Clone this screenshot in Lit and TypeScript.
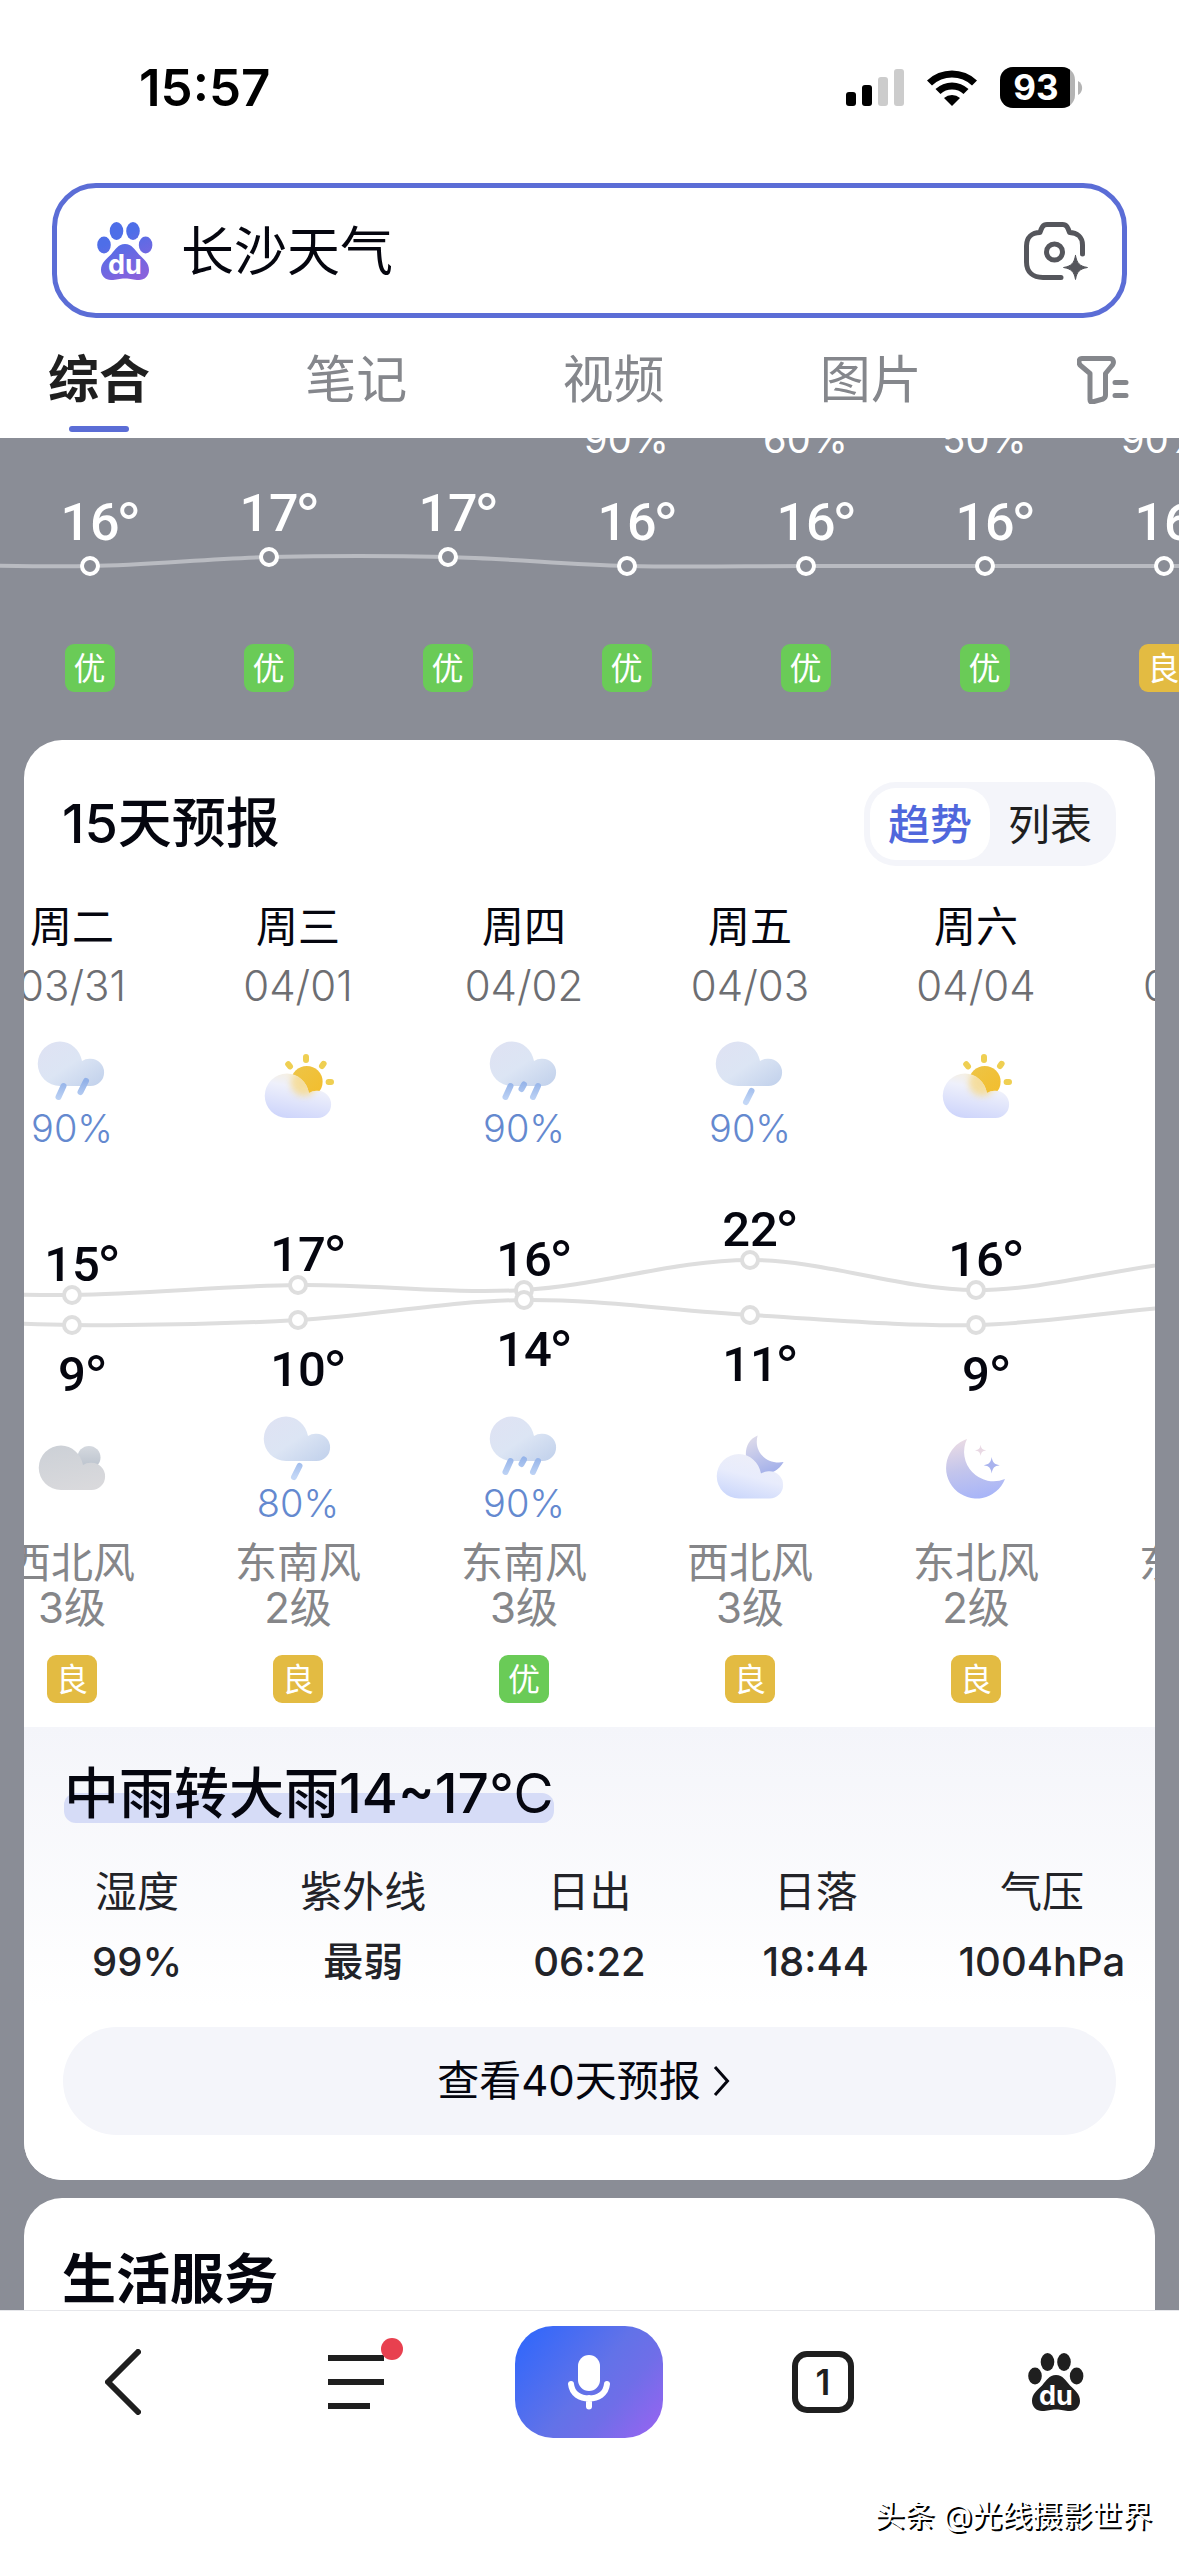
import { LitElement, html, svg, css, nothing } from "lit";
import { customElement, property } from "lit/decorators.js";
import { classMap } from "lit/directives/class-map.js";

type Sky = "rain1" | "rain2" | "rain3" | "sun" | "cloud" | "moonCloud" | "moon";

interface Hour {
  pop?: string;
  temp: number;
  air: string;
}

interface Day {
  name: string;
  date: string;
  high: number;
  low: number;
  daySky: Sky;
  dayPop?: string;
  nightSky: Sky;
  nightPop?: string;
  wind: string;
  level: string;
  air: string;
}

const HOURS: Hour[] = [
  { temp: 16, air: "优" },
  { temp: 17, air: "优" },
  { temp: 17, air: "优" },
  { pop: "90%", temp: 16, air: "优" },
  { pop: "60%", temp: 16, air: "优" },
  { pop: "50%", temp: 16, air: "优" },
  { pop: "90%", temp: 16, air: "良" },
];

const DAYS: Day[] = [
  { name: "周二", date: "03/31", high: 15, low: 9, daySky: "rain2", dayPop: "90%", nightSky: "cloud", wind: "西北风", level: "3级", air: "良" },
  { name: "周三", date: "04/01", high: 17, low: 10, daySky: "sun", nightSky: "rain1", nightPop: "80%", wind: "东南风", level: "2级", air: "良" },
  { name: "周四", date: "04/02", high: 16, low: 14, daySky: "rain3", dayPop: "90%", nightSky: "rain3", nightPop: "90%", wind: "东南风", level: "3级", air: "优" },
  { name: "周五", date: "04/03", high: 22, low: 11, daySky: "rain1", dayPop: "90%", nightSky: "moonCloud", wind: "西北风", level: "3级", air: "良" },
  { name: "周六", date: "04/04", high: 16, low: 9, daySky: "sun", nightSky: "moon", wind: "东北风", level: "2级", air: "良" },
  { name: "周日", date: "04/05", high: 22, low: 13, daySky: "sun", nightSky: "moon", wind: "东北风", level: "2级", air: "良" },
];

const STATS = [
  ["湿度", "99%"],
  ["紫外线", "最弱"],
  ["日出", "06:22"],
  ["日落", "18:44"],
  ["气压", "1004hPa"],
];

type Point = [number, number];

/* Catmull-Rom spline through the points, as cubic Béziers. */
function smoothPath(p: Point[]): string {
  let d = `M${p[0][0]} ${p[0][1]}`;
  for (let i = 0; i < p.length - 1; i++) {
    const a = p[Math.max(i - 1, 0)];
    const b = p[i];
    const c = p[i + 1];
    const e = p[Math.min(i + 2, p.length - 1)];
    d += `C${b[0] + (c[0] - a[0]) / 6} ${b[1] + (c[1] - a[1]) / 6} ${c[0] - (e[0] - b[0]) / 6} ${c[1] - (e[1] - b[1]) / 6} ${c[0]} ${c[1]}`;
  }
  return d;
}

const cloudPath = (y: number) =>
  `M29 ${y + 45}A22 22 0 0 1 29 ${y + 0.5}C40 ${y + 0.5} 49 ${y + 9} 51 ${y + 20}A13.6 13.6 0 0 1 59.5 ${y + 17.8}A13.6 13.6 0 0 1 59.5 ${y + 45}Z`;

@customElement("sky-icon")
export class SkyIcon extends LitElement {
  @property() kind: Sky = "sun";

  static styles = css`
    :host { display: block; }
    svg { display: block; overflow: visible; }
    .drop { stroke: url(#drop); stroke-width: 6; stroke-linecap: round; }
    .ray { stroke: #efcf52; stroke-width: 6; stroke-linecap: round; }
  `;

  private drops(lines: number[][]) {
    return lines.map(([x1, y1, x2, y2]) => svg`<line class="drop" x1=${x1} y1=${y1} x2=${x2} y2=${y2} />`);
  }

  private art() {
    switch (this.kind) {
      case "rain1":
        return svg`<path d=${cloudPath(5)} fill="url(#rainCloud)" />${this.drops([[42.5, 55, 37, 66]])}`;
      case "rain2":
        return svg`<path d=${cloudPath(5)} fill="url(#rainCloud)" />${this.drops([[32.5, 50, 27.5, 61], [55, 45, 49.5, 56]])}`;
      case "rain3":
        return svg`<path d=${cloudPath(5)} fill="url(#rainCloud)" />${this.drops([[27.5, 50, 22.5, 61], [41, 48.5, 38.5, 53], [55, 50, 50, 61]])}`;
      case "sun":
        return svg`
          <circle cx="48.8" cy="45.7" r="15.8" fill="url(#sun)" />
          <path class="ray" d="M48 21V24M64 30L65.6 27.8M70.6 46H73M32 30.4L30.2 28.2" />
          <path d=${cloudPath(37)} fill="url(#dayCloud)" />
          <clipPath id="glass"><path d=${cloudPath(37)} /></clipPath>
          <g clip-path="url(#glass)">
            <circle cx="46" cy="47" r="13" fill="#f6d98a" opacity=".8" filter="url(#soft)" />
          </g>`;
      case "cloud":
        return svg`
          <circle cx="57" cy="46.5" r="11.5" fill="url(#greyBack)" />
          <path d=${cloudPath(34)} fill="url(#grey)" />`;
      case "moonCloud":
        return svg`
          <path d="M47.6 24.4C39 28 35 36 36 46C37 57 45 63 53 63C62 63 69 59 73.6 51C58 54 43 42 47.6 24.4Z" fill="url(#moonSmall)" />
          <path d=${cloudPath(42.5)} fill="url(#nightCloud)" />`;
      case "moon":
        return svg`
          <path d="M31 28A30.5 30.5 0 1 0 69 68A29.5 29.5 0 0 1 31 28Z" fill="url(#moon)" />
          <path d="M55.7 46C56.6 51.6 58.2 53.3 63.7 54.2C58.2 55.1 56.6 56.8 55.7 62.4C54.8 56.8 53.2 55.1 47.7 54.2C53.2 53.3 54.8 51.6 55.7 46Z" fill="#a9b3ee" />
          <path d="M44.6 33.8C45.2 37.7 46.3 38.8 50.2 39.4C46.3 40 45.2 41.1 44.6 45C44 41.1 42.9 40 39 39.4C42.9 38.8 44 37.7 44.6 33.8Z" fill="#e9d9e4" />`;
    }
  }

  render() {
    const h = this.kind.startsWith("rain") ? 72 : 112;
    return html`<svg width="80" height=${h} viewBox="0 0 80 ${h}" fill="none" aria-hidden="true">
      <defs>
        <linearGradient id="rainCloud" x1="0" y1="0" x2="1" y2="1"><stop stop-color="#dfe2f3" /><stop offset=".5" stop-color="#dce5f4" /><stop offset="1" stop-color="#c0d0eb" /></linearGradient>
        <linearGradient id="drop" gradientUnits="userSpaceOnUse" x1="0" y1="45" x2="0" y2="66"><stop stop-color="#92b1e8" /><stop offset="1" stop-color="#c3d7f6" /></linearGradient>
        <linearGradient id="sun" x1="0" y1="0" x2="1" y2="1"><stop stop-color="#edc548" /><stop offset="1" stop-color="#f3bd2b" /></linearGradient>
        <linearGradient id="dayCloud" x1=".7" y1="0" x2=".4" y2="1"><stop stop-color="#f8f0dc" /><stop offset=".35" stop-color="#eef0fb" /><stop offset="1" stop-color="#cfd6fb" /></linearGradient>
        <linearGradient id="nightCloud" x1=".7" y1="0" x2=".3" y2="1"><stop stop-color="#eeeff8" /><stop offset=".5" stop-color="#e8ecfc" /><stop offset="1" stop-color="#cbd7fb" /></linearGradient>
        <linearGradient id="grey" x1=".3" y1="0" x2=".6" y2="1"><stop stop-color="#cdd1d7" /><stop offset="1" stop-color="#d9d9dc" /></linearGradient>
        <linearGradient id="greyBack" x1="0" y1="0" x2="0" y2="1"><stop stop-color="#d5d9df" /><stop offset="1" stop-color="#b9c1cc" /></linearGradient>
        <linearGradient id="moonSmall" x1=".2" y1="0" x2=".6" y2="1"><stop stop-color="#dfdcea" /><stop offset="1" stop-color="#a3b0ea" /></linearGradient>
        <linearGradient id="moon" x1=".3" y1="0" x2=".5" y2="1"><stop stop-color="#eadbe4" /><stop offset=".5" stop-color="#c3c5ec" /><stop offset="1" stop-color="#a8b5f8" /></linearGradient>
        <filter id="soft" x="-50%" y="-50%" width="200%" height="200%"><feGaussianBlur stdDeviation="3" /></filter>
      </defs>
      ${this.art()}
    </svg>`;
  }
}

@customElement("paw-logo")
export class PawLogo extends LitElement {
  @property() tone: "brand" | "dark" = "brand";

  static styles = css`
    :host { display: block; }
    svg { display: block; }
    .word { font: 700 27px Inter, "Liberation Sans", sans-serif; fill: #fff; text-anchor: middle; }
  `;

  render() {
    const fill = this.tone === "brand" ? "url(#brand)" : "#1f1f1f";
    return html`<svg width="56" height="58" viewBox="0 0 56 58" aria-hidden="true">
      <defs>
        <linearGradient id="brand" gradientUnits="userSpaceOnUse" x1="10" y1="0" x2="38" y2="58">
          <stop offset=".3" stop-color="#4e6ee8" /><stop offset="1" stop-color="#8a62dc" />
        </linearGradient>
      </defs>
      <g fill=${fill}>
        <ellipse cx="19.5" cy="9" rx="6.8" ry="9" />
        <ellipse cx="36" cy="9" rx="6.8" ry="9" />
        <ellipse cx="7" cy="23" rx="6.8" ry="8.4" />
        <ellipse cx="48.6" cy="23" rx="6.8" ry="8.4" />
        <path d="M28 22C35 22 37.5 27.5 42 32.5C47 37.5 52 41 52 48C52 54 47.5 58 42 58C36 58 34 56.5 28 56.5C22 56.5 20 58 14 58C8.5 58 4 54 4 48C4 41 9 37.5 14 32.5C18.5 27.5 21 22 28 22Z" />
      </g>
      <text class="word" x="28" y="52">du</text>
    </svg>`;
  }
}

@customElement("app-root")
export class AppRoot extends LitElement {
  static styles = css`
    :host {
      display: block;
      font-family: Inter, "Noto Sans CJK SC", sans-serif;
      color: #05060f;
    }
    * { box-sizing: border-box; }
    button, input {
      font: inherit;
      color: inherit;
      border: 0;
      padding: 0;
      margin: 0;
      background: none;
    }
    h2, ul, dl, dd, p { margin: 0; padding: 0; }
    ul { list-style: none; }
    svg { display: block; flex: none; }

    .page {
      display: flex;
      flex-direction: column;
      height: 100vh;
      overflow: hidden;
      background: #fff;
    }

    .status {
      display: flex;
      align-items: center;
      justify-content: space-between;
      height: 60px;
      margin: 58px 96px 65px 139px;
      color: #000;
    }
    .clock { font-size: 51px; font-weight: 600; line-height: 60px; }
    .signals { display: flex; align-items: center; gap: 23px; }
    .charge { font: 700 35px Inter, sans-serif; fill: #fff; text-anchor: middle; }

    .search {
      display: flex;
      align-items: center;
      gap: 28px;
      height: 135px;
      margin: 0 52px;
      padding: 0 34px 0 40px;
      border: 5px solid #5b6dd6;
      border-radius: 44px;
    }
    .query { flex: 1; min-width: 0; padding-top: 2px; font-size: 53px; line-height: 76px; outline: none; }

    .tabs {
      display: flex;
      align-items: flex-start;
      justify-content: space-between;
      height: 120px;
      padding: 32px 50px 0 48px;
    }
    .tab {
      display: flex;
      flex-direction: column;
      align-items: center;
      gap: 16px;
      font-size: 51px;
      line-height: 60px;
      color: #85878c;
    }
    .tab.on { font-weight: 700; color: #1f1f1f; }
    .tab.on::after {
      content: "";
      width: 60px;
      height: 6px;
      border-radius: 3px;
      background: #5b6dd6;
    }
    .filter { height: 60px; display: flex; align-items: center; }

    .feed { flex: 1; min-height: 0; overflow: hidden; background: #8a8d96; }

    .hourly { overflow: hidden; height: 302px; color: #fff; }
    .hours { display: flex; }
    .hours > li { flex: none; width: 179px; display: flex; justify-content: center; }
    .pops { height: 40px; margin-top: -20px; font-size: 38px; line-height: 42px; }
    .hour-line { fill: none; stroke: #b9bbc1; stroke-width: 4; }
    .hour-dot { fill: #8a8d96; stroke: #fff; stroke-width: 4; }
    .hour-temp { font: 500 52px Roboto, sans-serif; fill: #fff; text-anchor: middle; }
    .hour-deg { font: 400 52px Inter, sans-serif; fill: #fff; }

    .air {
      width: 50px;
      height: 48px;
      border-radius: 9px;
      background: #6acb57;
      color: #fff;
      font-size: 32px;
      line-height: 50px;
      text-align: center;
    }
    .air.fair { background: #e3bb42; }

    .card { margin: 0 24px 18px; border-radius: 38px; background: #fff; overflow: hidden; }
    .head {
      display: flex;
      align-items: center;
      justify-content: space-between;
      padding: 42px 39px 34px 38px;
    }
    .title { font-size: 54px; line-height: 60px; font-weight: 500; }
    .title.strong { font-weight: 700; padding: 52px 38px; }
    .switch {
      display: flex;
      padding: 6px;
      border-radius: 32px;
      background: #f4f5fa;
      font-size: 42px;
      line-height: 74px;
      color: #1f1f1f;
    }
    .choice { height: 72px; padding: 0 18px; border-radius: 26px; }
    .choice.on { background: #fff; color: #5067dc; font-weight: 500; }

    .strip { margin-left: -65px; font-size: 42px; }
    .days { display: flex; }
    .days > li {
      flex: none;
      width: 226px;
      display: flex;
      flex-direction: column;
      align-items: center;
    }
    .name { line-height: 54px; }
    .date { margin: 10px 0 28px; line-height: 44px; font-weight: 300; color: #6d6e72; }
    .sky { height: 112px; }
    .pop { font-size: 38px; line-height: 40px; font-weight: 300; color: #6489cf; text-align: center; }
    .wind { display: flex; flex-direction: column; margin: 17px 0 25px; line-height: 45px; text-align: center; color: #858689; }
    .days .air { margin-bottom: 24px; }
    .day-line { fill: none; stroke: #dedede; stroke-width: 4; }
    .day-dot { fill: #fff; stroke: #dedede; stroke-width: 4; }
    .day-temp { font: 500 49px Roboto, sans-serif; fill: #05060f; text-anchor: middle; }
    .day-deg { font: 400 49px Inter, sans-serif; fill: #05060f; }

    .detail {
      padding: 35px 0 45px;
      background: linear-gradient(#f4f5fa, #fff 280px);
    }
    .summary {
      position: relative;
      width: fit-content;
      margin: 0 40px 45px;
      font-size: 55px;
      line-height: 62px;
      height: 60px;
      font-weight: 500;
      isolation: isolate;
    }
    .summary::before {
      content: "";
      position: absolute;
      z-index: -1;
      inset: 31px 0 -1px;
      border-radius: 12px;
      background: #d6dcf7;
    }
    .unit { font-weight: 400; }
    .stats { display: grid; grid-template-columns: repeat(5, 1fr); font-size: 42px; line-height: 50px; color: #222328; }
    .stat { display: flex; flex-direction: column; align-items: center; gap: 20px; }
    .stat dd { font-size: 40px; font-weight: 500; white-space: nowrap; }
    .more {
      display: flex;
      align-items: center;
      justify-content: center;
      gap: 12px;
      height: 108px;
      margin: 40px 39px 0;
      padding-right: 12px;
      border-radius: 54px;
      background: #f4f5fa;
      color: #05060f;
      font-size: 42px;
      line-height: 50px;
      text-decoration: none;
    }

    .dock {
      flex: none;
      display: flex;
      flex-direction: column;
      height: 246px;
      border-top: 1px solid #e6e7eb;
      background: #fff;
    }
    .actions { display: grid; grid-template-columns: repeat(5, 1fr); padding: 15px 6px 0; }
    .action { display: flex; align-items: center; justify-content: center; height: 112px; }
    .mic {
      display: flex;
      align-items: center;
      justify-content: center;
      width: 148px;
      height: 112px;
      border-radius: 38px;
      background: linear-gradient(130deg, #3468fa 8%, #6272e8 50%, #6f6ee8 68%, #9b63f2 100%);
    }
    .count { font: 600 35px Inter, sans-serif; fill: #1f1f1f; text-anchor: middle; }
    .credit {
      margin: 55px 27px 0 0;
      text-align: right;
      font-size: 30px;
      line-height: 44px;
      color: #fff;
      text-shadow: 2px 2px 0 #000;
    }
  `;

  private hourChart() {
    const y = (t: number) => 108 - (t - 16) * 9;
    const x = (i: number) => 90 + i * 179;
    const pts: Point[] = [[-90, 106], ...HOURS.map((h, i): Point => [x(i), y(h.temp)]), [1342, 108]];
    return html`<svg width="1253" height="186" viewBox="0 0 1253 186">
      <path class="hour-line" d=${smoothPath(pts)} />
      ${HOURS.map((h, i) => svg`
        <circle class="hour-dot" cx=${x(i)} cy=${y(h.temp)} r="8" />
        <text class="hour-temp" x=${x(i)} y=${y(h.temp) - 26}>${h.temp}</text>
        <text class="hour-deg" x=${x(i) + 27} y=${y(h.temp) - 26}>°</text>`)}
    </svg>`;
  }

  private dayChart() {
    const y = (t: number) => 222 - t * 5;
    const x = (i: number) => 113 + i * 226;
    const curve = (first: number, pick: (d: Day) => number, last: number) =>
      smoothPath([[-113, y(first)], ...DAYS.map((d, i): Point => [x(i), y(pick(d))]), [1469, y(last)]]);
    const label = (i: number, t: number, base: number) => svg`
      <text class="day-temp" x=${x(i)} y=${base}>${t}</text>
      <text class="day-deg" x=${x(i) + (t > 9 ? 26 : 13)} y=${base}>°</text>`;
    return html`<svg width="1356" height="263" viewBox="0 0 1356 263">
      <path class="day-line" d=${curve(16, (d) => d.high, 22)} />
      <path class="day-line" d=${curve(11, (d) => d.low, 13)} />
      ${DAYS.map((d, i) => svg`
        <circle class="day-dot" cx=${x(i)} cy=${y(d.high)} r="8" />
        <circle class="day-dot" cx=${x(i)} cy=${y(d.low)} r="8" />
        ${label(i, d.high, y(d.high) - 14)}
        ${label(i, d.low, y(d.low) + 66)}`)}
    </svg>`;
  }

  private air(value: string) {
    return html`<span class=${classMap({ air: true, fair: value === "良" })}>${value}</span>`;
  }

  private sky(kind: Sky, pop?: string) {
    return html`<div class="sky">
      <sky-icon kind=${kind}></sky-icon>
      ${pop ? html`<div class="pop">${pop}</div>` : nothing}
    </div>`;
  }

  private header() {
    return html`<header>
      <div class="status">
        <span class="clock">15:57</span>
        <div class="signals">
          <svg width="58" height="38" viewBox="0 0 58 38">
            <rect y="23" width="10" height="14" rx="3" />
            <rect x="16" y="16" width="10" height="21" rx="3" />
            <rect x="32" y="8" width="10" height="29" rx="3" fill="#ccc" />
            <rect x="48" y="0" width="10" height="37" rx="3" fill="#ccc" />
          </svg>
          <svg width="50" height="38" viewBox="0 0 50 38">
            <path d="M0 11.5A36 36 0 0 1 50 11.5L45 16.5A29 29 0 0 0 5 16.5Z" />
            <path d="M8.5 20A24 24 0 0 1 41.5 20L36.5 25A17 17 0 0 0 13.5 25Z" />
            <path d="M17 29A12 12 0 0 1 33 29L25 37Z" />
          </svg>
          <svg width="83" height="42" viewBox="0 0 83 42">
            <defs><clipPath id="cell"><rect width="75" height="41" rx="13" /></clipPath></defs>
            <g clip-path="url(#cell)">
              <rect width="75" height="41" fill="#b4b4b4" />
              <rect width="70" height="41" />
            </g>
            <path d="M78 14C83.5 17 83.5 25 78 28Z" fill="#b4b4b4" />
            <text class="charge" x="36" y="33">93</text>
          </svg>
        </div>
      </div>
      <form class="search" @submit=${(e: Event) => e.preventDefault()}>
        <paw-logo></paw-logo>
        <input class="query" type="text" aria-label="搜索" value="长沙天气" />
        <button type="button" aria-label="拍照搜索">
          <svg width="64" height="58" viewBox="0 0 64 58" fill="none" stroke="#55565c" stroke-width="5" stroke-linecap="round" stroke-linejoin="round">
            <path d="M37 55.5H19C9 55.5 2.5 50 2.5 40V24C2.5 15.5 8 10.5 16 10.5C17.5 6 18.5 2.5 23 2.5H38.5C43 2.5 44 6 45.5 10.5C53 10.5 58.5 15 58.5 23V32" />
            <circle cx="30.5" cy="30" r="8" />
            <path d="M51.5 33.5C53 41.5 55.5 44 63.5 45.5C55.5 47 53 49.5 51.5 57.5C50 49.5 47.5 47 39.5 45.5C47.5 44 50 41.5 51.5 33.5Z" fill="#55565c" stroke-width="1" />
          </svg>
        </button>
      </form>
      <nav class="tabs">
        <button class="tab on">综合</button>
        <button class="tab">笔记</button>
        <button class="tab">视频</button>
        <button class="tab">图片</button>
        <button class="filter" aria-label="筛选">
          <svg width="52" height="48" viewBox="0 0 52 48" fill="none" stroke="#85878c" stroke-width="5" stroke-linejoin="round" stroke-linecap="round">
            <path d="M5 2.5H33C36 2.5 37.5 6 35.5 9L28.5 17.5V39C28.5 41 28 42 26 43L15.5 46C13.5 46.5 13 45 13 43.5V17.5L3 9C1 6 2 2.5 5 2.5Z" />
            <path d="M38 26.5H49M38 39.5H49" />
          </svg>
        </button>
      </nav>
    </header>`;
  }

  private dock() {
    return html`<footer class="dock">
      <nav class="actions">
        <button class="action" aria-label="返回">
          <svg width="36" height="66" viewBox="0 0 36 66" fill="none" stroke="#1f1f1f" stroke-width="6" stroke-linecap="round" stroke-linejoin="round"><path d="M33 3L3 33L33 63" /></svg>
        </button>
        <button class="action" aria-label="菜单">
          <svg width="56" height="56" viewBox="0 0 56 56" overflow="visible">
            <path d="M0 4H56M0 28H56M0 52H42" stroke="#1f1f1f" stroke-width="6" />
            <circle cx="64" cy="-5" r="11" fill="#e8404f" />
          </svg>
        </button>
        <div class="action">
          <button class="mic" aria-label="语音搜索">
            <svg width="42" height="56" viewBox="0 0 42 56">
              <rect x="10" y="1" width="22" height="36" rx="11" fill="#fff" />
              <path d="M3 30C4 40 12 44.5 21 44.5S38 40 39 30M21 44V52.5" fill="none" stroke="#fff" stroke-width="6" stroke-linecap="round" />
            </svg>
          </button>
        </div>
        <button class="action" aria-label="窗口">
          <svg width="62" height="62" viewBox="0 0 62 62">
            <rect x="3" y="3" width="56" height="56" rx="12" fill="none" stroke="#1f1f1f" stroke-width="6" />
            <text class="count" x="31" y="44">1</text>
          </svg>
        </button>
        <button class="action" aria-label="首页"><paw-logo tone="dark"></paw-logo></button>
      </nav>
      <p class="credit">头条 @光线摄影世界</p>
    </footer>`;
  }

  render() {
    return html`<div class="page" lang="zh-CN">
      ${this.header()}
      <main class="feed">
        <section class="hourly">
          <ul class="hours pops">${HOURS.map((h) => html`<li>${h.pop ?? nothing}</li>`)}</ul>
          ${this.hourChart()}
          <ul class="hours">${HOURS.map((h) => html`<li>${this.air(h.air)}</li>`)}</ul>
        </section>
        <section class="card">
          <div class="head">
            <h2 class="title">15天预报</h2>
            <div class="switch">
              <button class="choice on">趋势</button>
              <button class="choice">列表</button>
            </div>
          </div>
          <div class="strip">
            <ul class="days">
              ${DAYS.map((d) => html`<li>
                <span class="name">${d.name}</span>
                <span class="date">${d.date}</span>
                ${this.sky(d.daySky, d.dayPop)}
              </li>`)}
            </ul>
            ${this.dayChart()}
            <ul class="days">
              ${DAYS.map((d) => html`<li>
                ${this.sky(d.nightSky, d.nightPop)}
                <div class="wind"><span>${d.wind}</span><span>${d.level}</span></div>
                ${this.air(d.air)}
              </li>`)}
            </ul>
          </div>
          <div class="detail">
            <h2 class="summary">中雨转大雨14~17<span class="unit">℃</span></h2>
            <dl class="stats">
              ${STATS.map(([k, v]) => html`<div class="stat"><dt>${k}</dt><dd>${v}</dd></div>`)}
            </dl>
            <a class="more" href="#forecast40">查看40天预报
              <svg width="17" height="32" viewBox="0 0 17 32" fill="none" stroke="#05060f" stroke-width="3"><path d="M2 2L14.5 16L2 30" /></svg>
            </a>
          </div>
        </section>
        <section class="card">
          <h2 class="title strong">生活服务</h2>
        </section>
      </main>
      ${this.dock()}
    </div>`;
  }
}
